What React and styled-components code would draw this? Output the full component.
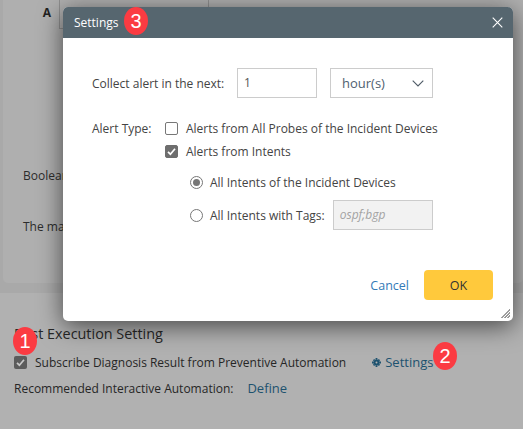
import React from "react";
import styled, { createGlobalStyle } from "styled-components";

const Global = createGlobalStyle`
  html, body { margin: 0; padding: 0; width: 523px; height: 429px; overflow: hidden; }
  body { font-family: "Open Sans", "Liberation Sans", sans-serif; font-size: 12px; color: #333; }
  * { box-sizing: border-box; }
`;

const Page = styled.div`
  position: relative;
  width: 523px;
  height: 429px;
  overflow: hidden;
  background: #a9a9a9;
  display: flex;
  flex-direction: column;
`;

const TopPanel = styled.section`
  height: 289px;
  margin: -6px 0 0 3px;
  background: #afafaf;
  border-radius: 5px;
  display: flex;
  flex-direction: column;
`;

const TableHead = styled.div`
  height: 35px;
  display: grid;
  grid-template-columns: 57px 149px 1fr;
  align-items: start;
`;

const HeadCell = styled.div`
  height: 35px;
  font-weight: 700;
  font-size: 12px;
  color: #222;
  text-align: right;
  padding: 10px 8px 0 0;
  border-right: 1px solid #8f8f8f;
  &:nth-child(2) { border-bottom: 1px solid #8f8f8f; }
`;

const CutText = styled.div`
  color: #2c2c2c;
  margin-left: 20px;
  line-height: 16px;
  margin-top: ${p => p.$top}px;
`;

const Lower = styled.section`
  margin-top: 10px;
  flex: 1;
  background: #b1b1b1;
  padding: 32px 14px 0;
`;

const SectionTitle = styled.h3`
  margin: 0;
  font-size: 14.400px;
  font-weight: 400;
  line-height: 18px;
  color: #272727;
  white-space: nowrap;
`;

const SubRow = styled.div`
  display: flex;
  align-items: center;
  margin-top: 11px;
  height: 16px;
  color: #262626;
  white-space: nowrap;
`;

const DimBox = styled.span`
  width: 13px;
  height: 13px;
  border-radius: 2px;
  background: #5c5c5c;
  margin-right: 8px;
  display: inline-flex;
  align-items: center;
  justify-content: center;
`;

const BackLink = styled.a`
  color: #1d526f;
  font-size: 13px;
  display: inline-flex;
  align-items: center;
  gap: 4px;
  margin-left: ${p => p.$left}px;
`;

const DefineRow = styled.div`
  margin-top: 10px;
  height: 16px;
  display: flex;
  align-items: center;
  color: #262626;
  white-space: nowrap;
`;

const Modal = styled.div`
  position: absolute;
  left: 63px;
  top: 7px;
  width: 450px;
  height: 314px;
  background: #fff;
  border-radius: 5px;
  box-shadow: 0 5px 24px rgba(0, 0, 0, 0.6);
  display: flex;
  flex-direction: column;
`;

const ModalHead = styled.header`
  height: 31px;
  background: #56666f;
  border-radius: 5px 5px 0 0;
  color: #fff;
  font-size: 12px;
  display: flex;
  align-items: center;
  justify-content: space-between;
  padding: 0 10px 0 11px;
`;

const CloseIcon = styled.svg`
  width: 11px;
  height: 11px;
  display: block;
`;

const ModalBody = styled.div`
  flex: 1;
  padding: 30px 0 0 29px;
  display: flex;
  flex-direction: column;
  color: #444;
  white-space: nowrap;
`;

const CollectRow = styled.div`
  display: flex;
  align-items: center;
  height: 30px;
`;

const CollectLabel = styled.label`
  width: 145px;
`;

const NumberBox = styled.div`
  width: 80px;
  height: 30px;
  border: 1px solid #ccc;
  padding: 0 6px;
  line-height: 28px;
  color: #555;
`;

const SelectBox = styled.div`
  width: 103px;
  height: 30px;
  margin-left: 13px;
  border: 1px solid #ccc;
  padding: 0 8px 0 11px;
  display: flex;
  align-items: center;
  justify-content: space-between;
  color: #4f6170;
  font-size: 13px;
`;

const AlertRow = styled.div`
  display: flex;
  align-items: center;
  height: 16px;
  margin-top: ${p => p.$top}px;
  padding-left: ${p => p.$indent || 0}px;
`;

const AlertLabel = styled.span`
  width: 73px;
`;

const Check = styled.span`
  width: 13px;
  height: 13px;
  border-radius: 2px;
  border: 1px solid ${p => (p.$on ? "#6e6e6e" : "#777")};
  background: ${p => (p.$on ? "#6e6e6e" : "#fff")};
  margin-right: 8px;
  display: inline-flex;
  align-items: center;
  justify-content: center;
`;

const Radio = styled.span`
  width: 13px;
  height: 13px;
  border-radius: 50%;
  border: 1px solid #777;
  margin-right: 7px;
  display: inline-flex;
  align-items: center;
  justify-content: center;
  &::after {
    content: "";
    display: ${p => (p.$on ? "block" : "none")};
    width: 7px;
    height: 7px;
    border-radius: 50%;
    background: #777;
  }
`;

const TagRow = styled.div`
  display: flex;
  align-items: center;
  height: 30px;
  margin-top: 10px;
  padding-left: 98px;
`;

const TagInput = styled.div`
  width: 100px;
  height: 30px;
  margin-left: 8px;
  border: 1px solid #ccc;
  background: #f2f2f2;
  color: #a3a3a3;
  font-style: italic;
  padding: 0 6px;
  line-height: 28px;
`;

const Footer = styled.footer`
  height: 51px;
  padding: 0 20px 21px 0;
  display: flex;
  align-items: center;
  justify-content: flex-end;
`;

const CancelLink = styled.a`
  color: #337ab7;
  font-size: 12.500px;
  margin-right: 15px;
`;

const OkButton = styled.button`
  width: 69px;
  height: 30px;
  border: 0;
  border-radius: 4px;
  background: #ffc93c;
  color: #333;
  font: inherit;
  font-size: 12.500px;
`;

const Grip = styled.svg`
  position: absolute;
  right: 3px;
  bottom: 3px;
  width: 9px;
  height: 9px;
`;

const Badge = styled.span`
  position: absolute;
  left: ${p => p.$x}px;
  top: ${p => p.$y}px;
  width: 24px;
  height: 28px;
  border-radius: 50%;
  background: #fb3b42;
  color: #fff;
  font-family: "Liberation Sans", sans-serif;
  font-size: 20px;
  display: flex;
  align-items: center;
  justify-content: center;
`;

const Tick = () => (
  <svg width="9" height="9" viewBox="0 0 9 9" fill="none">
    <path d="M1 4.800 3.400 7.200 8 1.800" stroke="#fff" strokeWidth="1.700" />
  </svg>
);

const DimTick = () => (
  <svg width="9" height="9" viewBox="0 0 9 9" fill="none">
    <path d="M1 4.800 3.400 7.200 8 1.800" stroke="#c8c8c8" strokeWidth="1.700" />
  </svg>
);

const Cog = () => (
  <svg width="9" height="9" viewBox="0 0 10 10">
    <circle cx="5" cy="5" r="2.200" fill="none" stroke="#1d526f" strokeWidth="2.200" />
    <path d="M4 0h2v2H4zM4 8h2v2H4zM0 4h2v2H0zM8 4h2v2H8zM1 2.400 2.400 1l1.200 1.200L2.200 3.600zM7.600 1 9 2.400 7.800 3.600 6.400 2.200zM1 7.600l1.200-1.200 1.400 1.400L2.400 9zM6.400 7.800l1.400-1.400L9 7.600 7.600 9z" fill="#1d526f" />
  </svg>
);

export default function App() {
  return (
    <Page>
      <Global />
      <TopPanel>
        <TableHead>
          <HeadCell>A</HeadCell>
          <HeadCell />
        </TableHead>
        <CutText $top={139}>Boolean</CutText>
        <CutText $top={35}>The maximum</CutText>
      </TopPanel>
      <Lower>
        <SectionTitle>Post Execution Setting</SectionTitle>
        <SubRow>
          <DimBox><DimTick /></DimBox>
          Subscribe Diagnosis Result from Preventive Automation
          <BackLink $left={26}><Cog />Settings</BackLink>
        </SubRow>
        <DefineRow>
          Recommended Interactive Automation:
          <BackLink $left={14}>Define</BackLink>
        </DefineRow>
      </Lower>

      <Modal>
        <ModalHead>
          Settings
          <CloseIcon viewBox="0 0 11 11" fill="none">
            <path d="M.7.7l9.6 9.6M10.300.7.7 10.300" stroke="#fff" strokeWidth="1.100" />
          </CloseIcon>
        </ModalHead>
        <ModalBody>
          <CollectRow>
            <CollectLabel>Collect alert in the next:</CollectLabel>
            <NumberBox>1</NumberBox>
            <SelectBox>
              hour(s)
              <svg width="12" height="7" viewBox="0 0 12 7" fill="none">
                <path d="M.7.7 6 6 11.300.7" stroke="#4f5b66" strokeWidth="1.100" />
              </svg>
            </SelectBox>
          </CollectRow>
          <AlertRow $top={22}>
            <AlertLabel>Alert Type:</AlertLabel>
            <Check />
            Alerts from All Probes of the Incident Devices
          </AlertRow>
          <AlertRow $top={7} $indent={73}>
            <Check $on><Tick /></Check>
            Alerts from Intents
          </AlertRow>
          <AlertRow $top={15} $indent={98}>
            <Radio $on />
            All Intents of the Incident Devices
          </AlertRow>
          <TagRow>
            <Radio />
            All Intents with Tags:
            <TagInput>ospf;bgp</TagInput>
          </TagRow>
        </ModalBody>
        <Footer>
          <CancelLink>Cancel</CancelLink>
          <OkButton>OK</OkButton>
        </Footer>
        <Grip viewBox="0 0 9 9">
          <path d="M9 0v1L1 9H0zM9 3v1L4 9H3zM9 6v1L7 9H6z" fill="#333" />
        </Grip>
      </Modal>

      <Badge $x={13} $y={327}>1</Badge>
      <Badge $x={433} $y={342}>2</Badge>
      <Badge $x={124} $y={7}>3</Badge>
    </Page>
  );
}
